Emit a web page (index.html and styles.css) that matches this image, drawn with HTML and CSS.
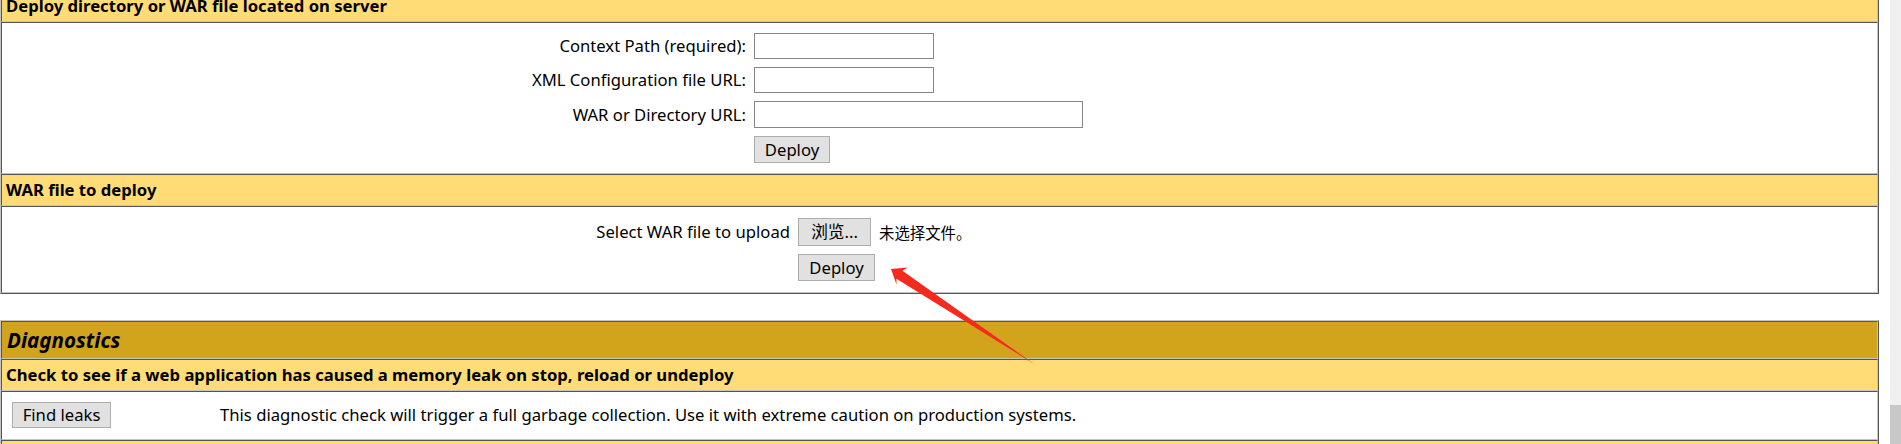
FILE: index.html
```html
<!DOCTYPE html>
<html lang="en">
<head>
<meta charset="utf-8">
<title>Tomcat Web Application Manager</title>
<link rel="stylesheet" href="styles.css">
</head>
<body>
<div class="screen">
  <main class="page">
    <section class="panel">
      <div class="row header">Deploy directory or WAR file located on server</div>
      <div class="row body">
        <form class="form form-deploy">
          <div class="cell lbl">Context Path (required):</div>
          <div class="cell"><input class="txt txt-short" type="text"></div>
          <div class="cell lbl">XML Configuration file URL:</div>
          <div class="cell"><input class="txt txt-short" type="text"></div>
          <div class="cell lbl">WAR or Directory URL:</div>
          <div class="cell"><input class="txt txt-long" type="text"></div>
          <div class="cell lbl"></div>
          <div class="cell"><button class="btn btn-deploy" type="button">Deploy</button></div>
        </form>
      </div>
      <div class="row header">WAR file to deploy</div>
      <div class="row body">
        <form class="form form-war">
          <div class="cell lbl">Select WAR file to upload</div>
          <div class="cell file">
            <button class="btn btn-browse" type="button">浏览...</button>
            <span class="filename">未选择文件。</span>
          </div>
          <div class="cell lbl"></div>
          <div class="cell"><button class="btn btn-deploy2" type="button">Deploy</button></div>
        </form>
      </div>
    </section>

    <section class="panel">
      <div class="row title">Diagnostics</div>
      <div class="row header">Check to see if a web application has caused a memory leak on stop, reload or undeploy</div>
      <div class="row body">
        <form class="form form-diag">
          <div class="cell cell-leaks"><button class="btn btn-leaks" type="button">Find leaks</button></div>
          <div class="cell desc">This diagnostic check will trigger a full garbage collection. Use it with extreme caution on production systems.</div>
        </form>
      </div>
      <div class="row header">&nbsp;</div>
    </section>
  </main>

  <div class="scrollbar"><div class="thumb"></div></div>

  <svg class="arrow" width="1901" height="444" viewBox="0 0 1901 444" aria-hidden="true">
    <polygon points="891,269 907.6,267.4 902.4,270.8 1035,364.6 896.4,278.8 896.6,284.8" fill="#f52a1e"/>
  </svg>
</div>
</body>
</html>
```
FILE: styles.css
```css
* { box-sizing: border-box; }

html, body {
  margin: 0;
  height: 100%;
}

body {
  background: #fff;
  overflow: hidden;
  color: #000;
  font-family: "Noto Sans", "Noto Sans CJK SC", sans-serif;
}

.screen {
  position: relative;
  display: flex;
  height: 444px;
  overflow: hidden;
}

.page {
  flex: 1;
  min-width: 0;
  margin-top: -11px;
  margin-right: 11px;
}

/* table border="1": outset outer frame */
.panel {
  border: 1px solid;
  border-color: #c4c4c4 #555 #555 #c4c4c4;
}

.panel + .panel {
  margin-top: 26px;
}

/* inset cell borders */
.row {
  border: 1px solid;
  border-color: #555 #c4c4c4 #c4c4c4 #555;
}

.header {
  background: #ffdc75;
  font-weight: bold;
  font-size: 16.67px;
  line-height: 22px;
  padding: 4px 4px;
  white-space: nowrap;
}

.title {
  background: #d2a41c;
  font-weight: bold;
  font-style: italic;
  font-size: 20.6px;
  line-height: 28px;
  padding: 4px 5px;
}

.body {
  background: #fff;
  font-size: 16.67px;
  line-height: 22px;
}

.form {
  display: grid;
  align-items: center;
}

.cell {
  padding: 4px;
}

.lbl {
  text-align: right;
  white-space: nowrap;
}

.form-deploy {
  grid-template-columns: 744px auto;
  justify-content: start;
  padding: 6px 4px;
}

.form-war {
  grid-template-columns: 788px auto;
  justify-content: start;
  padding: 7px 4px;
}

.form-diag {
  grid-template-columns: 210px 1fr;
  padding: 6px 4px 7px;
}

.cell-leaks {
  padding-left: 6px;
}

.file {
  display: flex;
  align-items: center;
}

.txt {
  display: block;
  height: 26px;
  border: 1px solid #858585;
  background: #fff;
  padding: 0 4px;
  font: inherit;
  margin: 0;
}

.txt-short { width: 180px; }
.txt-long { width: 329px; height: 27px; }

.btn {
  display: block;
  margin: 0;
  padding: 0;
  height: 27px;
  background: #e1e1e1;
  border: 1px solid #adadad;
  border-radius: 0;
  color: #000;
  font-family: "Noto Sans", "Noto Sans CJK SC", sans-serif;
  font-size: 16.67px;
  line-height: 22px;
}

.btn-deploy { width: 76px; }
.btn-deploy2 { width: 77px; }
.btn-browse { width: 73px; height: 28px; }
.btn-leaks { width: 99px; height: 26px; }

.filename {
  margin-left: 8px;
  font-size: 15.4px;
  font-family: "Noto Sans CJK SC", sans-serif;
}

.desc {
  white-space: nowrap;
}

.scrollbar {
  flex: 0 0 11px;
  display: flex;
  flex-direction: column;
  justify-content: flex-end;
  background: #f0f0f0;
}

.thumb {
  height: 39px;
  background: #c8c8c8;
}

.arrow {
  position: absolute;
  left: 0;
  top: 0;
  pointer-events: none;
}
```
